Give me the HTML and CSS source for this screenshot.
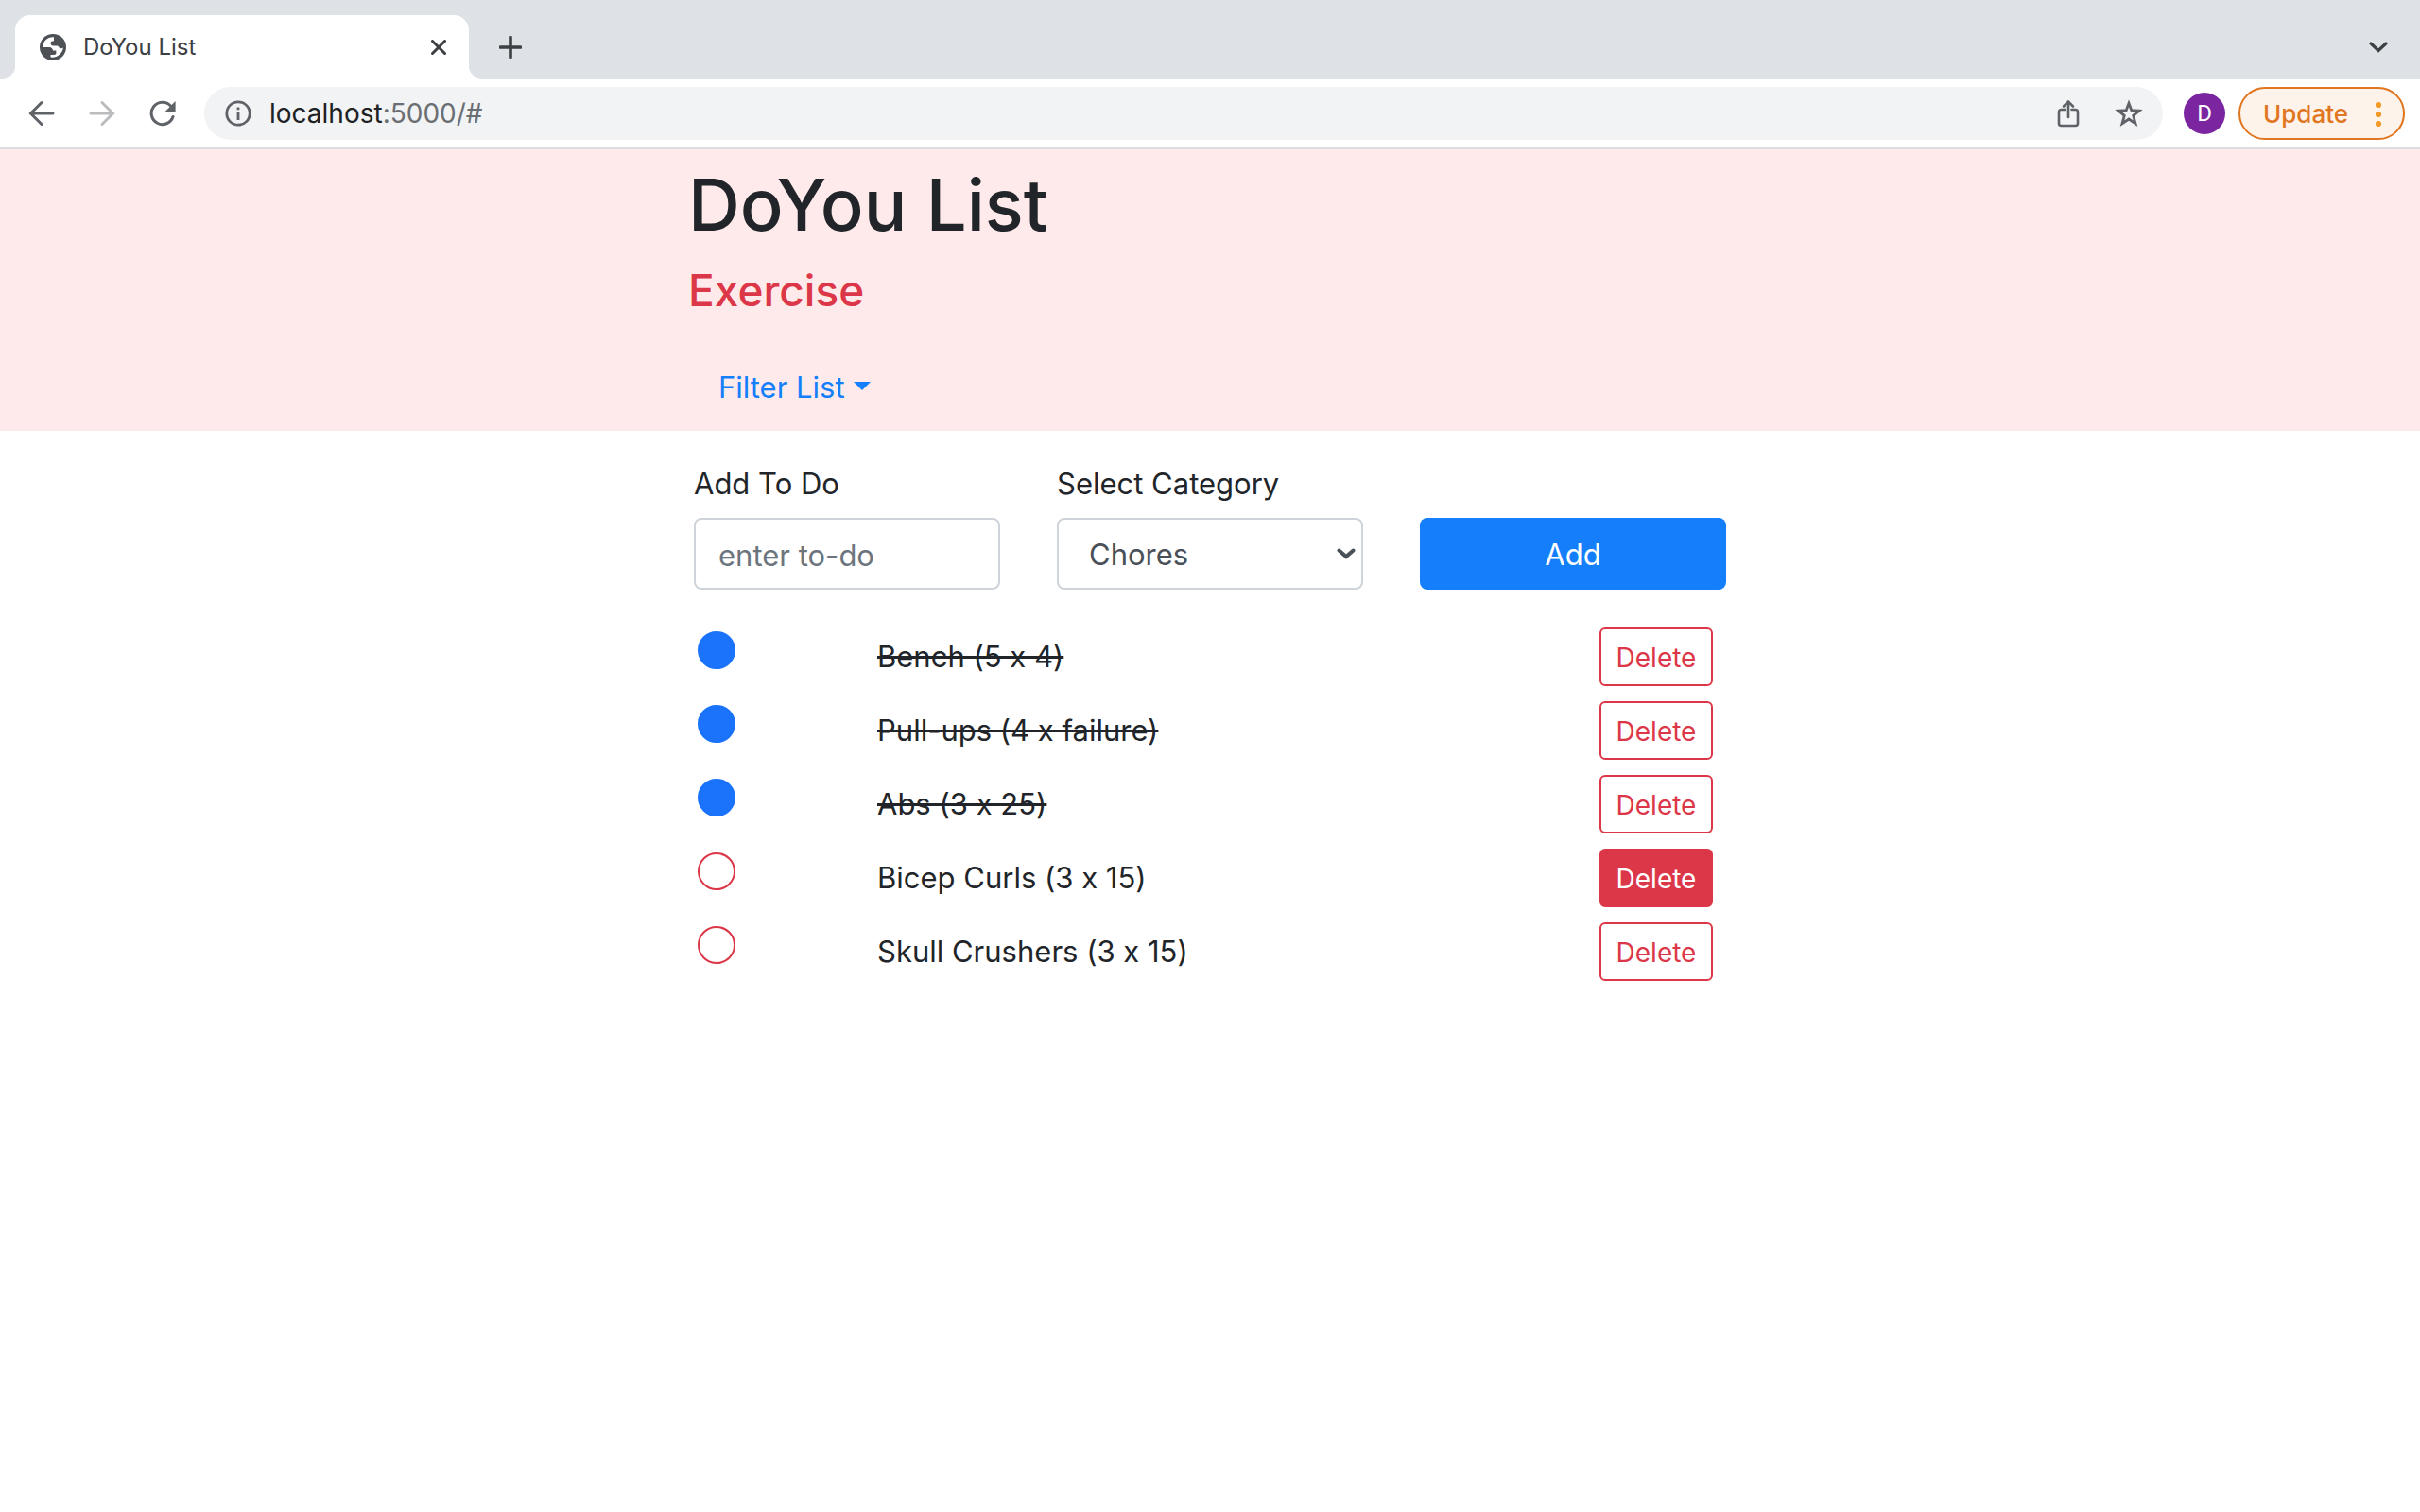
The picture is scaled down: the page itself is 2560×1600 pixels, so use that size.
FILE: index.html
```html
<!DOCTYPE html>
<html lang="en">
<head>
<meta charset="utf-8">
<title>DoYou List</title>
<link rel="stylesheet" href="styles.css">
</head>
<body>
<div class="browser">
  <div class="tabstrip">
    <div class="tab">
      <svg class="tab-icon" width="28" height="28" viewBox="0 0 28 28" aria-hidden="true"><circle cx="14" cy="14" r="14" fill="#4d5156"/><path d="M15 3.300C8.500 2.900 3.300 7.500 3.200 14H9.500C12 14 13.600 15.300 13.800 17.400H17.400V20.300C17.400 21.500 16.500 21.900 15.200 21.900H11.500V24.600C18 25.600 24.200 21 24.800 14.500C23.500 15.600 21.500 15.500 20.700 14.600C19.900 13.700 19.800 12.600 18.600 12.600H14.500C12.500 12.600 11.600 11.400 11.600 9.800C11.600 7.800 12.700 7.300 15 7.200Z" fill="#fff"/><path d="M3.200 14H9.500C12 14 13.600 15.300 13.800 17.400V18.700H9.800V21.500L11.500 24.600C6.500 23.500 3 19 3.200 14Z" fill="#4d5156"/></svg>
      <span class="tab-title">DoYou List</span>
      <button class="icon-button" aria-label="Close tab"><svg width="16" height="16" viewBox="0 0 16 16"><path d="M1.500 1.500 14.500 14.500M14.500 1.500 1.500 14.500" stroke="#3c4043" stroke-width="3" stroke-linecap="round"/></svg></button>
    </div>
    <button class="icon-button" aria-label="New tab"><svg width="24" height="24" viewBox="0 0 24 24"><path d="M12 1.500V22.500M1.500 12H22.500" stroke="#3c4043" stroke-width="3.600" stroke-linecap="round"/></svg></button>
    <button class="icon-button tab-search" aria-label="Search tabs"><svg width="20" height="12" viewBox="0 0 20 12"><path d="M2 2 10 9.500 18 2" fill="none" stroke="#3c4043" stroke-width="3.200" stroke-linecap="round"/></svg></button>
  </div>
  <div class="toolbar">
    <div class="nav-buttons">
      <button class="icon-button" aria-label="Back"><svg width="28" height="28" viewBox="0 0 28 28"><path d="M26 14H3M14 2.500 2.500 14 14 25.500" fill="none" stroke="#5f6368" stroke-width="3" stroke-linecap="round"/></svg></button>
      <button class="icon-button" aria-label="Forward"><svg width="28" height="28" viewBox="0 0 28 28"><path d="M2 14H25M14 2.500 25.500 14 14 25.500" fill="none" stroke="#babcbe" stroke-width="3" stroke-linecap="round"/></svg></button>
      <button class="icon-button" aria-label="Reload"><svg width="28" height="28" viewBox="0 0 28 28"><path d="M25 17.500A11.700 11.700 0 1 1 22.500 6" fill="none" stroke="#5f6368" stroke-width="3" stroke-linecap="round"/><path d="M27.600 1V12.300H16.500Z" fill="#5f6368"/></svg></button>
    </div>
    <div class="omnibox">
      <svg width="28" height="28" viewBox="0 0 28 28" aria-hidden="true"><circle cx="14" cy="14" r="12.200" fill="none" stroke="#5f6368" stroke-width="2.800"/><path d="M12.600 12.500H15.400V21H12.600ZM12.600 7.500H15.400V10.300H12.600Z" fill="#5f6368"/></svg>
      <span class="url"><span class="url-host">localhost</span>:5000/#</span>
      <button class="icon-button" aria-label="Share"><svg width="24" height="32" viewBox="0 0 24 32"><path d="M8.500 12H4.500Q2 12 2 14.500V26.500Q2 29 4.500 29H19.500Q22 29 22 26.500V14.500Q22 12 19.500 12H15.500M12 20V4M7 8.500 12 3.500 17 8.500" fill="none" stroke="#5f6368" stroke-width="2.600" stroke-linecap="round"/></svg></button>
      <button class="icon-button" aria-label="Bookmark this page"><svg width="30" height="30" viewBox="0 0 30 30"><path d="M15 4.200 17.800 11.700 26 12.100 19.700 17.300 22 25.700 15 21 8 25.700 10.300 17.300 4 12.100 12.200 11.700Z" fill="none" stroke="#5f6368" stroke-width="2.800"/></svg></button>
    </div>
    <button class="avatar" aria-label="Profile">D</button>
    <button class="update">Update<svg width="8" height="28" viewBox="0 0 8 28" aria-hidden="true"><g fill="#f29a25"><circle cx="4" cy="4" r="3.100"/><circle cx="4" cy="14" r="3.100"/><circle cx="4" cy="24" r="3.100"/></g></svg></button>
  </div>
</div>
<header class="page-header">
  <div class="header-inner">
    <h1>DoYou List</h1>
    <h2>Exercise</h2>
    <button class="filter">Filter List<span class="caret"></span></button>
  </div>
</header>
<main class="content">
  <form class="add-form">
    <div class="field">
      <label for="todo">Add To Do</label>
      <input class="control" id="todo" type="text" placeholder="enter to-do">
    </div>
    <div class="field">
      <label for="category">Select Category</label>
      <div class="select-box">
        <select class="control" id="category"><option>Chores</option><option>Exercise</option></select>
        <svg width="20" height="12" viewBox="0 0 20 12" aria-hidden="true"><path d="M2.500 2.500 10 9 17.500 2.500" fill="none" stroke="#495057" stroke-width="4" stroke-linecap="round"/></svg>
      </div>
    </div>
    <button class="add" type="button">Add</button>
  </form>
  <ul class="todos">
    <li><input type="checkbox" id="t1" checked><label for="t1">Bench (5 x 4)</label><button class="delete">Delete</button></li>
    <li><input type="checkbox" id="t2" checked><label for="t2">Pull-ups (4 x failure)</label><button class="delete">Delete</button></li>
    <li><input type="checkbox" id="t3" checked><label for="t3">Abs (3 x 25)</label><button class="delete">Delete</button></li>
    <li><input type="checkbox" id="t4"><label for="t4">Bicep Curls (3 x 15)</label><button class="delete delete-active">Delete</button></li>
    <li><input type="checkbox" id="t5"><label for="t5">Skull Crushers (3 x 15)</label><button class="delete">Delete</button></li>
  </ul>
</main>
</body>
</html>
```
FILE: styles.css
```css
* { box-sizing: border-box; }

body {
  margin: 0;
  background: #fff;
  color: #212529;
  font: 31px/48px Inter, "Liberation Sans", sans-serif;
  font-variant-ligatures: no-contextual;
}

button, input, select {
  margin: 0;
  font: inherit;
}

button {
  padding: 0;
  border: 0;
  background: none;
  color: inherit;
  cursor: pointer;
}

svg { display: block; flex: none; }

/* Browser window */
.browser { border-bottom: 2px solid #dadce0; }

.tabstrip {
  display: flex;
  align-items: center;
  gap: 32px;
  padding: 16px 34px 0 16px;
  background: #dee1e6;
}

.tab {
  position: relative;
  display: flex;
  align-items: center;
  gap: 18px;
  width: 480px;
  height: 68px;
  padding: 0 24px 0 26px;
  border-radius: 16px 16px 0 0;
  background: #fff;
  color: #3c4043;
  font-size: 24px;
}

.tab::before, .tab::after {
  content: "";
  position: absolute;
  bottom: 0;
  width: 16px;
  height: 16px;
}

.tab::before {
  right: 100%;
  background: radial-gradient(circle at 0 0, #dee1e6 16px, #fff 17px);
}

.tab::after {
  left: 100%;
  background: radial-gradient(circle at 100% 0, #dee1e6 16px, #fff 17px);
}

.tab-title { flex: 1; }
.tab-search { margin-left: auto; }

.toolbar {
  display: flex;
  align-items: center;
  height: 72px;
  padding: 0 16px 0 30px;
}

.nav-buttons {
  display: flex;
  gap: 36px;
  margin-right: 30px;
}

.omnibox {
  display: flex;
  flex: 1;
  align-items: center;
  gap: 37px;
  height: 56px;
  margin-right: 22px;
  padding: 0 21px 0 22px;
  border-radius: 28px;
  background: #f1f3f4;
}

.url {
  flex: 1;
  margin-left: -18px;
  color: #6b6e72;
  font-size: 28px;
}

.url-host { color: #202124; }

.avatar {
  width: 44px;
  height: 44px;
  margin-right: 14px;
  border-radius: 50%;
  background: #7b26a0;
  color: #fff;
  font: 24px/44px Roboto, sans-serif;
}

.update {
  display: flex;
  align-items: center;
  justify-content: space-between;
  width: 176px;
  height: 56px;
  padding: 2px 22px 0 24px;
  border: 2px solid #e0761f;
  border-radius: 28px;
  background: #fef3ea;
  color: #e0761f;
  font-size: 26px;
  font-weight: 500;
}

/* Page header */
.page-header { background: #ffeaeb; }

.header-inner {
  max-width: 1104px;
  margin: 0 auto;
  padding: 10px 0 8px;
}

h1, h2 { margin: 0; font-weight: 500; }

h1 {
  font-size: 76px;
  line-height: 96px;
}

h2 {
  margin: 14px 0 36px;
  color: #dc3748;
  font-size: 46px;
  line-height: 58px;
}

.filter {
  display: flex;
  align-items: center;
  gap: 9px;
  height: 76px;
  padding: 0 32px;
  color: #157ffb;
}

.caret {
  margin-bottom: 4px;
  border: 9px solid transparent;
  border-top-color: currentColor;
  border-bottom: 0;
}

/* Add form */
.content {
  max-width: 1092px;
  margin: 0 auto;
  padding: 32px 0;
}

.add-form {
  display: grid;
  grid-template-columns: repeat(3, 1fr);
  gap: 60px;
  align-items: end;
}

.field {
  display: grid;
  gap: 12px;
}

.control {
  width: 100%;
  height: 76px;
  padding: 2px 24px 0;
  border: 2px solid #ced4da;
  border-radius: 8px;
  background: #fff;
  color: #495057;
}

.control::placeholder { color: #6c757d; opacity: 1; }

.select-box {
  display: grid;
  align-items: center;
}

.select-box > * { grid-area: 1 / 1; }

.select-box select {
  padding: 2px 32px 0;
  appearance: none;
}

.select-box svg {
  z-index: 1;
  justify-self: end;
  margin-right: 8px;
  pointer-events: none;
}

.add {
  height: 76px;
  padding-top: 2px;
  border-radius: 8px;
  background: #157ffb;
  color: #fff;
}

/* To-do list */
.todos {
  margin: 32px 0 0;
  padding: 0;
  list-style: none;
}

.todos li {
  display: grid;
  grid-template-columns: 190px 1fr 120px;
  align-items: center;
  height: 78px;
  padding: 0 14px 0 4px;
}

.todos input {
  width: 40px;
  height: 40px;
  margin-bottom: 14px;
  border: 2px solid #dc3748;
  border-radius: 50%;
  appearance: none;
}

.todos input:checked {
  border-color: #1a73fa;
  background: #1a73fa;
}

.todos input:checked + label { text-decoration: line-through; }

.delete {
  height: 62px;
  padding-top: 2px;
  border: 2px solid #dc3748;
  border-radius: 6px;
  color: #dc3748;
  font-size: 28px;
}

.delete-active {
  background: #dc3748;
  color: #fff;
}
```
